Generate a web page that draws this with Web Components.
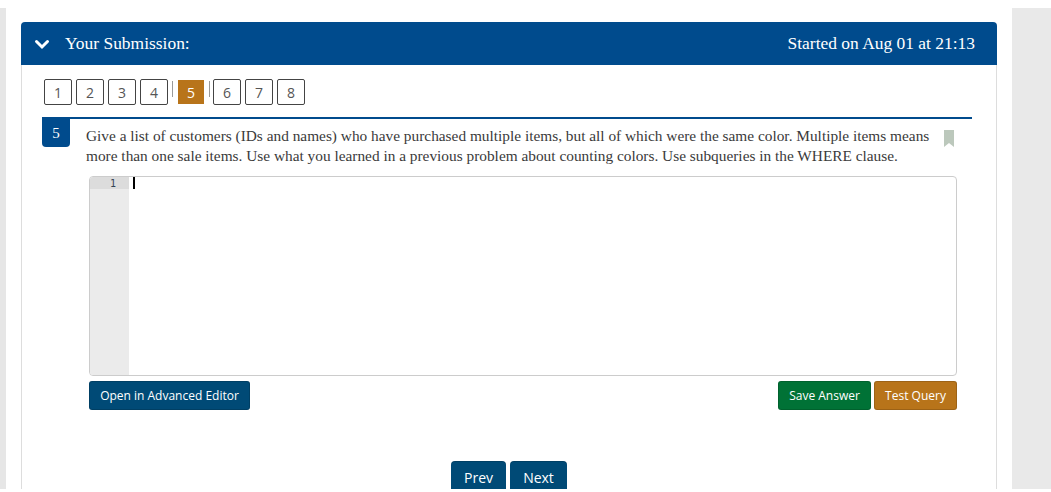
<!DOCTYPE html>
<html>
<head>
<meta charset="utf-8">
<title>Your Submission</title>
<style>
    html, body { margin: 0; background: #fff; }
    body { height: 492px; overflow: hidden; font-family: "Liberation Serif", serif; }
</style>
</head>
<body>
<submission-page>
    <submission-panel started="Started on Aug 01 at 21:13">
        <question-nav current="5" total="8"></question-nav>
        <question-block number="5">
            Give a list of customers (IDs and names) who have purchased multiple items, but all of which were the same color. Multiple items means more than one sale items. Use what you learned in a previous problem about counting colors. Use subqueries in the WHERE clause.
        </question-block>
        <pager-row></pager-row>
    </submission-panel>
</submission-page>

<script>
// Page frame: grey strips either side of the main column
class SubmissionPage extends HTMLElement {
    constructor() {
        super();
        this.attachShadow({ mode: "open" }).innerHTML = `
            <style>
            :host {
                display: flex;
                margin-top: 8px;
                height: 481px;
                overflow: hidden;
            }
            .left { width: 6px; background: #e6e6e6; flex: none; }
            .right { width: 39px; background: #e9e9e9; flex: none; }
            main { flex: 1; min-width: 0; padding: 14px 15px 0; }
            </style>
            <div class="left"></div>
            <main><slot></slot></main>
            <div class="right"></div>
        `;
    }
}

class SubmissionPanel extends HTMLElement {
    constructor() {
        super();
        this.attachShadow({ mode: "open" }).innerHTML = `
            <style>
            :host { display: block; }
            header {
                height: 43px;
                display: flex;
                align-items: center;
                justify-content: space-between;
                padding: 0 22px 0 13px;
                background: #004b8d;
                color: #fff;
                border-radius: 4px 4px 0 0;
                font: 17.45px "Liberation Serif", serif;
            }
            .title { display: flex; align-items: center; gap: 15px; }
            svg { display: block; }
            .body {
                border: solid #ddd;
                border-width: 0 1px;
                padding: 14px 24px 0 20px;
                height: 440px;
            }
            </style>
            <header>
                <div class="title">
                    <svg width="16" height="12" viewBox="0 0 16 12"><path d="M2.5 3.5 L8 9 L13.5 3.5" fill="none" stroke="#fff" stroke-width="3" stroke-linecap="round"/></svg>
                    <span>Your Submission:</span>
                </div>
                <span class="started"></span>
            </header>
            <div class="body"><slot></slot></div>
        `;
        this.shadowRoot.querySelector(".started").textContent = this.getAttribute("started");
    }
}

// The row of numbered question links
class QuestionNav extends HTMLElement {
    constructor() {
        super();
        const root = this.attachShadow({ mode: "open" });
        root.innerHTML = `
            <style>
            :host {
                display: flex;
                align-items: flex-start;
                gap: 4px;
                height: 26px;
                padding-left: 2px;
                font: 14px "Open Sans", sans-serif;
                color: #555;
            }
            .num {
                box-sizing: border-box;
                width: 28px;
                height: 26px;
                border: 1px solid #444;
                border-radius: 2px;
                display: flex;
                align-items: center;
                justify-content: center;
            }
            .active {
                width: 26px;
                height: 24px;
                margin: 1px 1px 0;
                background: #b8741a;
                border: 0;
                border-radius: 0;
                color: #fff;
            }
            .sep { width: 1px; height: 16px; margin-top: 2px; background: #9a9a9a; }
            .sep.after { margin-right: -1px; }
            </style>
        `;
        const current = parseInt(this.getAttribute("current"));
        const total = parseInt(this.getAttribute("total"));
        for(let i = 1; i <= total; i++) {
            if(i === current) root.appendChild(this.separator("sep"));
            const num = document.createElement("div");
            num.className = i === current ? "num active" : "num";
            num.textContent = i;
            root.appendChild(num);
            if(i === current) root.appendChild(this.separator("sep after"));
        }
    }

    separator(name) {
        const sep = document.createElement("div");
        sep.className = name;
        return sep;
    }
}

class QuestionBlock extends HTMLElement {
    constructor() {
        super();
        this.attachShadow({ mode: "open" }).innerHTML = `
            <style>
            :host {
                display: block;
                margin-top: 12px;
                border-top: 2px solid #004b8d;
                position: relative;
            }
            .badge {
                position: absolute;
                left: 0;
                top: 0;
                width: 28px;
                height: 28px;
                background: #004b8d;
                color: #fff;
                border-radius: 0 0 4px 4px;
                display: flex;
                align-items: center;
                justify-content: center;
                font: 15px "Liberation Serif", serif;
            }
            .text {
                display: flex;
                justify-content: space-between;
                gap: 10px;
                padding: 7px 18px 0 44px;
                font: 15.35px/20px "Liberation Serif", serif;
                color: #3a3a3a;
            }
            .copy { width: 850px; }
            .mark { flex: none; margin-top: 4px; }
            .work { padding: 10px 15px 0 47px; }
            .actions {
                display: flex;
                gap: 3px;
                margin-top: 5px;
            }
            .spacer { flex: 1; }
            </style>
            <div class="badge"></div>
            <div class="text">
                <div class="copy"><slot></slot></div>
                <svg class="mark" width="10" height="17" viewBox="0 0 10 17"><path d="M0 0H10V17L5 13L0 17Z" fill="#bcc8bc"/></svg>
            </div>
            <div class="work">
                <code-editor></code-editor>
                <div class="actions">
                    <action-button color="#004a76" width="161">Open in Advanced Editor</action-button>
                    <div class="spacer"></div>
                    <action-button color="#007236" width="93">Save Answer</action-button>
                    <action-button color="#b8741a" width="83">Test Query</action-button>
                </div>
            </div>
        `;
        this.shadowRoot.querySelector(".badge").textContent = this.getAttribute("number");
    }
}

class CodeEditor extends HTMLElement {
    constructor() {
        super();
        this.attachShadow({ mode: "open" }).innerHTML = `
            <style>
            :host {
                display: flex;
                box-sizing: border-box;
                height: 200px;
                border: 1px solid #ccc;
                border-radius: 4px;
                overflow: hidden;
                background: #fff;
            }
            .gutter { width: 39px; background: #ebebeb; flex: none; }
            .line {
                height: 12px;
                background: #dcdcdc;
                text-align: right;
                padding-right: 13px;
                box-sizing: border-box;
                font: 10px/13px "DejaVu Sans Mono", monospace;
                color: #345;
            }
            .cursor { width: 2px; height: 12px; margin-left: 4px; background: #000; }
            </style>
            <div class="gutter"><div class="line">1</div></div>
            <div class="cursor"></div>
        `;
    }
}

class ActionButton extends HTMLElement {
    constructor() {
        super();
        this.attachShadow({ mode: "open" }).innerHTML = `
            <style>
            :host {
                display: flex;
                box-sizing: border-box;
                height: 29px;
                align-items: center;
                justify-content: center;
                border-radius: 3px;
                box-shadow: inset 0 0 0 1px rgba(0, 0, 0, .15);
                color: #fff;
                font: 12px "Open Sans", sans-serif;
            }
            </style>
            <slot></slot>
        `;
    }

    connectedCallback() {
        this.style.background = this.getAttribute("color");
        this.style.width = this.getAttribute("width") + "px";
    }
}

class PagerRow extends HTMLElement {
    constructor() {
        super();
        this.attachShadow({ mode: "open" }).innerHTML = `
            <style>
            :host {
                display: flex;
                justify-content: center;
                gap: 4px;
                margin-top: 51px;
                padding-left: 4px;
            }
            .btn {
                height: 40px;
                padding-top: 7px;
                box-sizing: border-box;
                background: #004a76;
                border-radius: 4px 4px 0 0;
                box-shadow: inset 0 1px 0 rgba(0, 0, 0, .15);
                color: #fff;
                text-align: center;
                font: 14px/19px "Open Sans", sans-serif;
            }
            </style>
            <div class="btn" style="width:55px">Prev</div>
            <div class="btn" style="width:57px">Next</div>
        `;
    }
}

customElements.define("submission-page", SubmissionPage);
customElements.define("submission-panel", SubmissionPanel);
customElements.define("question-nav", QuestionNav);
customElements.define("question-block", QuestionBlock);
customElements.define("code-editor", CodeEditor);
customElements.define("action-button", ActionButton);
customElements.define("pager-row", PagerRow);
</script>
</body>
</html>
